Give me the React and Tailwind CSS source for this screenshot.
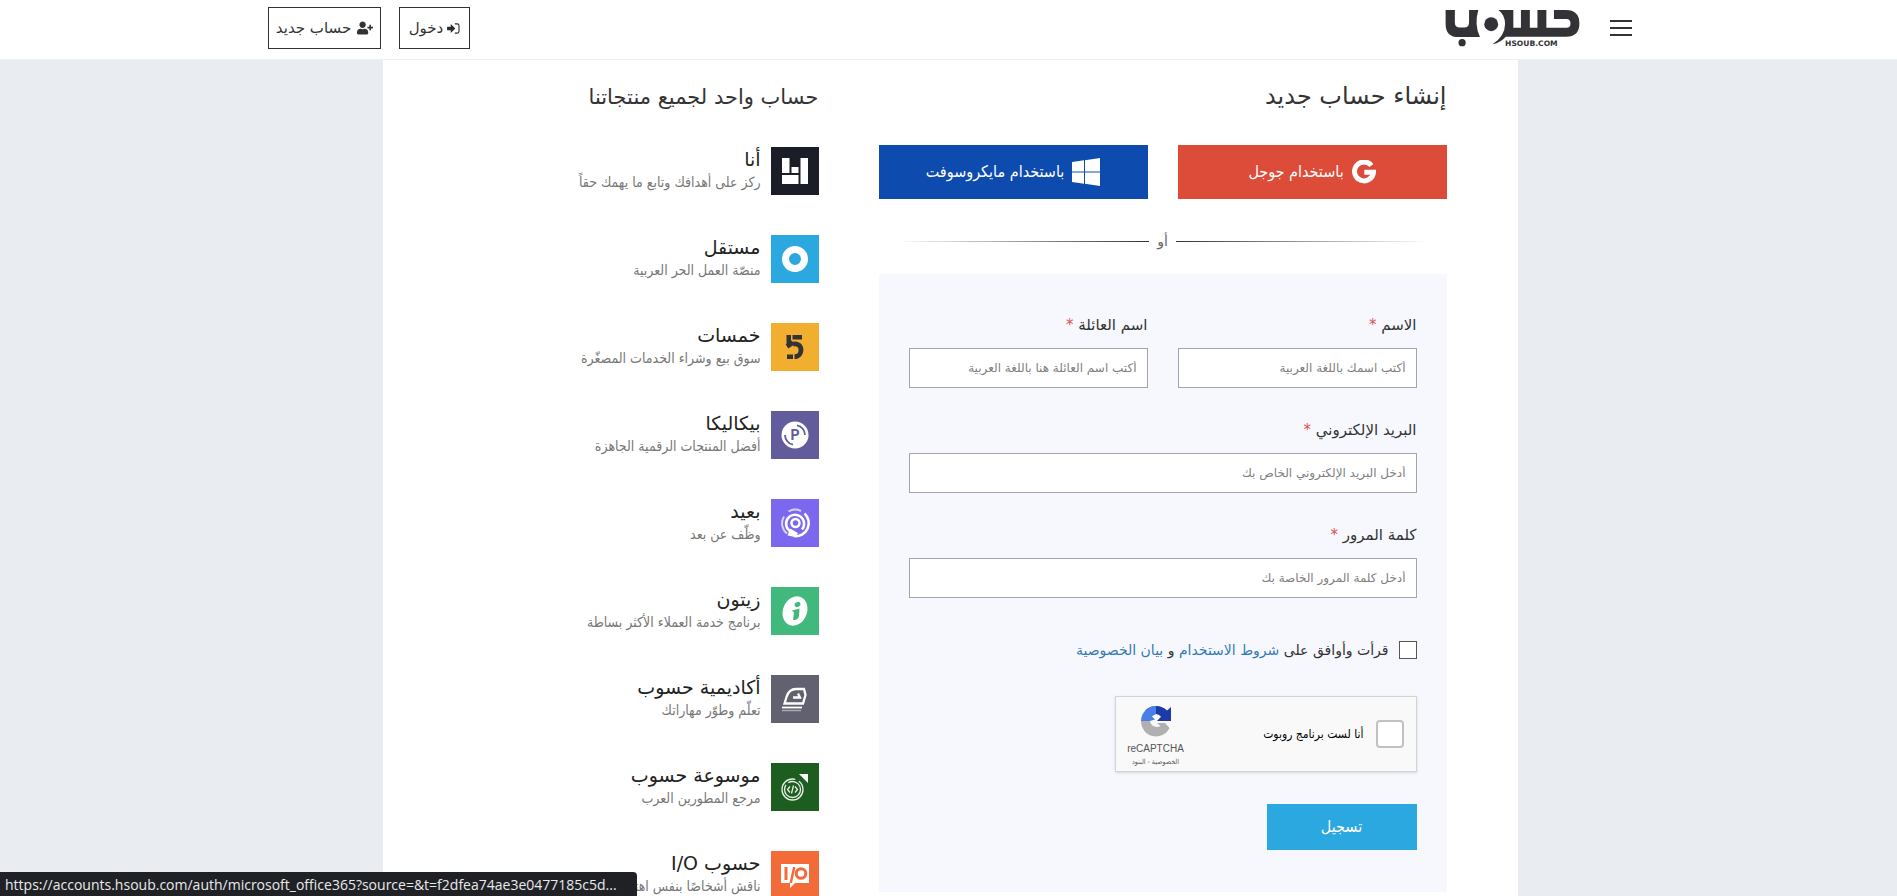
import React from "react";
import { FaUserPlus } from "react-icons/fa";

function HsoubLogo() {
  return (
    <svg viewBox="0 0 405 112" className="h-[37px] w-[135px]" role="img" aria-label="حسوب">
      <g fill="#333236">
        <path d="M0 0H28V38Q28 53 43 53H56Q71 53 71 38V0H99Q86 44 104 82H40Q0 82 0 42Z" />
        <circle cx="50" cy="99" r="11" />
        <circle cx="138" cy="43" r="21" />
        <path d="M160 0H205V54H228V0H255V54H278V0H305V54H366Q378 54 378 41Q378 27 366 27H328V0H364Q405 0 405 41Q405 81 364 81H182Q168 98 142 104Q180 78 180 42Q180 16 160 0Z" />
      </g>
      <text x="180" y="110" direction="ltr" fontSize="23" fontWeight="700" fill="#333236" fontFamily="DejaVu Sans, sans-serif">HSOUB.COM</text>
    </svg>
  );
}

function LoginIcon() {
  return (
    <svg viewBox="0 0 14 12" className="h-[11px] w-[13px]" aria-hidden="true">
      <path d="M0 4h4V1l5 5-5 5V8H0Z" fill="#2b2b2b" />
      <path d="M8.500 1H11a2 2 0 0 1 2 2v6a2 2 0 0 1-2 2H8.500" fill="none" stroke="#2b2b2b" strokeWidth="1.200" />
    </svg>
  );
}

function GoogleIcon() {
  return (
    <svg viewBox="0 0 24 24" className="size-6" aria-hidden="true">
      <path d="M19.500 5.500A9.500 9.500 0 1 0 21.500 12.200H12.300" fill="none" stroke="#fff" strokeWidth="5" />
    </svg>
  );
}

function WindowsIcon() {
  return (
    <svg viewBox="0 0 28 28" className="size-7" aria-hidden="true" fill="#fff">
      <path d="M0 4l12-1.700V13.500H0ZM13 2.200L28 0V13.500H13ZM0 14.500h12V25.700L0 24ZM13 14.500h15V28L13 25.800Z" />
    </svg>
  );
}

function Tile({ bg, children }) {
  return (
    <svg viewBox="0 0 48 48" className={"size-12 shrink-0 " + bg} aria-hidden="true">
      {children}
    </svg>
  );
}

const products = [
  {
    name: "أنا",
    text: "ركز على أهدافك وتابع ما يهمك حقاً",
    icon: (
      <Tile bg="bg-[#1b1e27]">
        <path d="M11 11h7.500v15H11ZM20.500 20h7v6h-7ZM29.500 11H37v26h-7.500ZM11 28h16.500v9H11Z" fill="#fff" />
      </Tile>
    ),
  },
  {
    name: "مستقل",
    text: "منصّة العمل الحر العربية",
    icon: (
      <Tile bg="bg-[#2ba8e0]">
        <circle cx="24" cy="24" r="9.500" fill="none" stroke="#fff" strokeWidth="7" />
      </Tile>
    ),
  },
  {
    name: "خمسات",
    text: "سوق بيع وشراء الخدمات المصغّرة",
    icon: (
      <Tile bg="bg-[#f2ae2e]">
        <path d="M15.500 12H20v9.500h-4.500ZM21.500 12H31v4.500h-9.500ZM16 31.500h6V36h-6Z" fill="#333236" />
        <path d="M16 23.500L22 19.500M22 21.200C27 20 30 23 30 27C30 30 28 33.700 23.500 33.700" fill="none" stroke="#333236" strokeWidth="4.800" />
      </Tile>
    ),
  },
  {
    name: "بيكاليكا",
    text: "أفضل المنتجات الرقمية الجاهزة",
    icon: (
      <Tile bg="bg-[#625b9c]">
        <circle cx="24" cy="24" r="13.500" fill="#fff" />
        <path d="M26 14.300A10 10 0 0 1 34 24M22 33.700A10 10 0 0 1 14 24" fill="none" stroke="#625b9c" strokeWidth="1.800" />
        <text x="24" y="29" textAnchor="middle" fontSize="14" fontWeight="700" fill="#625b9c" fontFamily="Roboto, sans-serif">P</text>
      </Tile>
    ),
  },
  {
    name: "بعيد",
    text: "وظّف عن بعد",
    icon: (
      <Tile bg="bg-[#7b68ee]">
        <g fill="none" stroke="#fff">
          <circle cx="24.500" cy="24" r="4" strokeWidth="2.500" />
          <path d="M19.500 32.500A9 9 0 1 1 31 30.500" strokeWidth="2.500" />
          <path d="M16 34.500A13 13 0 0 1 13 17.500M17.500 12.500A13 13 0 0 1 30 12" strokeWidth="2" opacity=".7" />
          <path d="M33.500 14.500A13 13 0 0 1 23 37" strokeWidth="2.500" />
        </g>
        <path d="M19 29.500L27 34L24 38L16.500 36.500Z" fill="#fff" />
      </Tile>
    ),
  },
  {
    name: "زيتون",
    text: "برنامج خدمة العملاء الأكثر بساطة",
    icon: (
      <Tile bg="bg-[#42b97c]">
        <ellipse cx="24" cy="24" rx="12" ry="15" transform="rotate(22 24 24)" fill="#fff" />
        <ellipse cx="26.500" cy="17.500" rx="3" ry="2.400" transform="rotate(-25 26.500 17.500)" fill="#42b97c" />
        <path d="M21 23.500L28.500 21.500L28 29Q27 33.500 22 33L23 25.500Z" fill="#42b97c" />
      </Tile>
    ),
  },
  {
    name: "أكاديمية حسوب",
    text: "تعلّم وطوّر مهاراتك",
    icon: (
      <Tile bg="bg-[#61616f]">
        <path d="M13.500 28.500L15.500 22Q18 14 25 14H33L34.500 20L32 28.500ZM22 22.500H29L27 18.500" fill="none" stroke="#fff" strokeWidth="2.300" />
        <path d="M11 32.500H31" stroke="#fff" strokeWidth="1.800" />
        <path d="M11 35.500H30" stroke="#a9a9b3" strokeWidth="1.500" />
      </Tile>
    ),
  },
  {
    name: "موسوعة حسوب",
    text: "مرجع المطورين العرب",
    icon: (
      <Tile bg="bg-[#1d5e20]">
        <g fill="none" stroke="#e8f0e8" strokeWidth="1.300">
          <circle cx="21.500" cy="26.500" r="10.500" strokeDasharray="52 4" />
          <circle cx="21.500" cy="26.500" r="8" strokeDasharray="30 3" />
          <path d="M19 23.500L16.500 26.500L19 29.500M22.500 22.500L20.500 30.500M24 23.500L26.500 26.500L24 29.500" />
        </g>
        <path d="M28 11H37V20Z" fill="#fff" />
      </Tile>
    ),
  },
  {
    name: "حسوب I/O",
    text: "ناقش أشخاصًا بنفس اهتماماتك",
    icon: (
      <Tile bg="bg-[#f26b38]">
        <path d="M10 13H38V32H24L19 37V32H10Z" fill="#fff" />
        <path d="M13.500 16h3v13h-3ZM22 16h2.500L21 32h-2.500Z" fill="#f26b38" />
        <circle cx="30" cy="22.500" r="4.800" fill="none" stroke="#f26b38" strokeWidth="3" />
      </Tile>
    ),
  },
];

function Field({ id, label, placeholder, type = "text" }) {
  return (
    <div className="flex flex-1 flex-col">
      <label htmlFor={id} className="mb-[9px] text-[15px] leading-[27px] text-[#333]">
        {label} <span className="text-[#d9534f]">*</span>
      </label>
      <input
        id={id}
        type={type}
        placeholder={placeholder}
        className="h-10 w-full border border-[#a3a3b3] bg-white px-2.5 text-xs text-[#333] placeholder:text-[#808080]"
      />
    </div>
  );
}

function RecaptchaLogo() {
  return (
    <svg viewBox="0 0 32 32" className="size-8" aria-hidden="true">
      <path d="M1 16A15 15 0 0 1 16 1V9A7 7 0 0 0 12 11.500L15 14.500L10 16Z" fill="#4a7fe5" />
      <path d="M5 5.500A15 15 0 0 1 16 1V9A7 7 0 0 0 12 11Z" fill="#4a7fe5" />
      <path d="M16 1A15 15 0 0 1 27 5.500L31 2V16H17L21 11.800A7 7 0 0 0 16 9Z" fill="#1c3aa9" />
      <path d="M1 16H10A7 7 0 0 0 20.500 21L17 18H25L29.500 23A15 15 0 0 1 1 16Z" fill="#b0b0b0" />
    </svg>
  );
}

export default function App() {
  return (
    <div
      dir="rtl"
      lang="ar"
      className="min-h-screen bg-[#e9ecf1] font-['DejaVu_Sans',sans-serif] text-[#333]"
    >
      <header className="border-b border-[#eeeff2] bg-white pb-[3px] pl-[3px]">
        <div className="mx-auto flex h-14 max-w-[1364px] items-center justify-between">
          <div className="flex items-center gap-[30px]">
            <button type="button" aria-label="القائمة" className="flex w-[22px] flex-col gap-[5px]">
              <span className="h-[2px] bg-[#333]" />
              <span className="h-[2px] bg-[#333]" />
              <span className="h-[2px] bg-[#333]" />
            </button>
            <a href="#home">
              <HsoubLogo />
            </a>
          </div>
          <nav className="flex gap-[18px] text-[15px]">
            <a href="#login" className="flex h-[42px] w-[71px] items-center justify-center gap-1 border border-[#333]">
              <LoginIcon />
              دخول
            </a>
            <a href="#register" className="flex h-[42px] w-[113px] items-center justify-center gap-1.5 border border-[#333]">
              <FaUserPlus className="size-4" aria-hidden="true" />
              حساب جديد
            </a>
          </nav>
        </div>
      </header>

      <div className="pl-[3px]">
        <main className="mx-auto flex max-w-[1135px] gap-[60px] bg-white px-[71px] pb-[60px]">
          <section className="w-[568px] shrink-0">
            <h1 className="pt-4 text-2xl leading-[40px]">إنشاء حساب جديد</h1>
            <div className="mt-[29px] flex gap-[30px] font-['DejaVu_Sans_Condensed','DejaVu_Sans',sans-serif]">
              <button type="button" className="flex h-[54px] flex-1 items-center justify-center gap-2 bg-[#dd4b39] text-base text-white">
                <GoogleIcon />
                باستخدام جوجل
              </button>
              <button type="button" className="flex h-[54px] flex-1 items-center justify-center gap-2 bg-[#0e4bae] text-base text-white">
                <WindowsIcon />
                باستخدام مايكروسوفت
              </button>
            </div>
            <div className="mt-[30px] flex h-6 items-center gap-2 px-[18px] text-sm text-[#666]">
              <span className="h-px flex-1 bg-linear-to-r from-[#333] to-transparent" />
              أو
              <span className="h-px flex-1 bg-linear-to-l from-[#333] to-transparent" />
            </div>

            <form className="mt-[21px] flex flex-col bg-[#f7f8fe] px-[30px] pt-[38px] pb-[42px]" onSubmit={(e) => e.preventDefault()}>
              <div className="flex flex-col gap-[29px]">
                <div className="flex gap-[30px]">
                  <Field id="first" label="الاسم" placeholder="أكتب اسمك باللغة العربية" />
                  <Field id="last" label="اسم العائلة" placeholder="أكتب اسم العائلة هنا باللغة العربية" />
                </div>
                <Field id="email" type="email" label="البريد الإلكتروني" placeholder="أدخل البريد الإلكتروني الخاص بك" />
                <Field id="password" type="password" label="كلمة المرور" placeholder="أدخل كلمة المرور الخاصة بك" />
              </div>
              <div className="mt-[38px] flex h-7 items-center gap-2.5 text-sm">
                <input id="terms" type="checkbox" className="size-[18px] appearance-none border border-[#555] bg-white" />
                <label htmlFor="terms">
                  قرأت وأوافق على{" "}
                  <a href="#terms-of-use" className="text-[#337ab7]">شروط الاستخدام</a> و{" "}
                  <a href="#privacy" className="text-[#337ab7]">بيان الخصوصية</a>
                </label>
              </div>
              <div className="mt-8 flex h-[76px] w-[302px] items-center border border-[#d3d3d8] bg-[#f9f9f9] pr-3 pl-2 font-['DejaVu_Sans_Condensed','DejaVu_Sans',sans-serif] shadow-sm">
                <input id="robot" type="checkbox" className="size-7 appearance-none rounded-sm border-2 border-[#c1c1c1] bg-white" />
                <label htmlFor="robot" className="mr-3 text-xs text-black">أنا لست برنامج روبوت</label>
                <div className="mr-auto flex w-16 flex-col items-center pt-1 text-[#555]">
                  <RecaptchaLogo />
                  <span className="mt-1 font-['Liberation_Sans',sans-serif] text-[10px] leading-4">reCAPTCHA</span>
                  <span className="text-[7px] leading-[10px] whitespace-nowrap">الخصوصية - البنود</span>
                </div>
              </div>
              <button type="submit" className="mt-8 h-[46px] w-[150px] bg-[#2ba8e0] font-['DejaVu_Sans_Condensed','DejaVu_Sans',sans-serif] text-base text-white">تسجيل</button>
            </form>
          </section>

          <aside className="min-w-0 flex-1">
            <h2 className="pt-[19px] text-[21px] leading-9">حساب واحد لجميع منتجاتنا</h2>
            <ul className="mt-8 flex flex-col gap-10">
              {products.map((p) => (
                <li key={p.name} className="flex h-12 gap-2.5">
                  {p.icon}
                  <div className="whitespace-nowrap">
                    <h3 className="text-[19px] leading-6 text-[#222]">{p.name}</h3>
                    <p className="font-['DejaVu_Sans_Condensed','DejaVu_Sans',sans-serif] text-sm leading-[22px] text-[#777]">{p.text}</p>
                  </div>
                </li>
              ))}
            </ul>
          </aside>
        </main>
      </div>

      <div
        dir="ltr"
        className="fixed bottom-0 left-0 h-6 rounded-tr bg-[#202124] pr-5 pl-[5px] font-['Open_Sans',sans-serif] text-sm leading-[26px] text-[#e8eaed]"
      >
        https://accounts.hsoub.com/auth/microsoft_office365?source=&amp;t=f2dfea74ae3e0477185c5d...
      </div>
    </div>
  );
}
